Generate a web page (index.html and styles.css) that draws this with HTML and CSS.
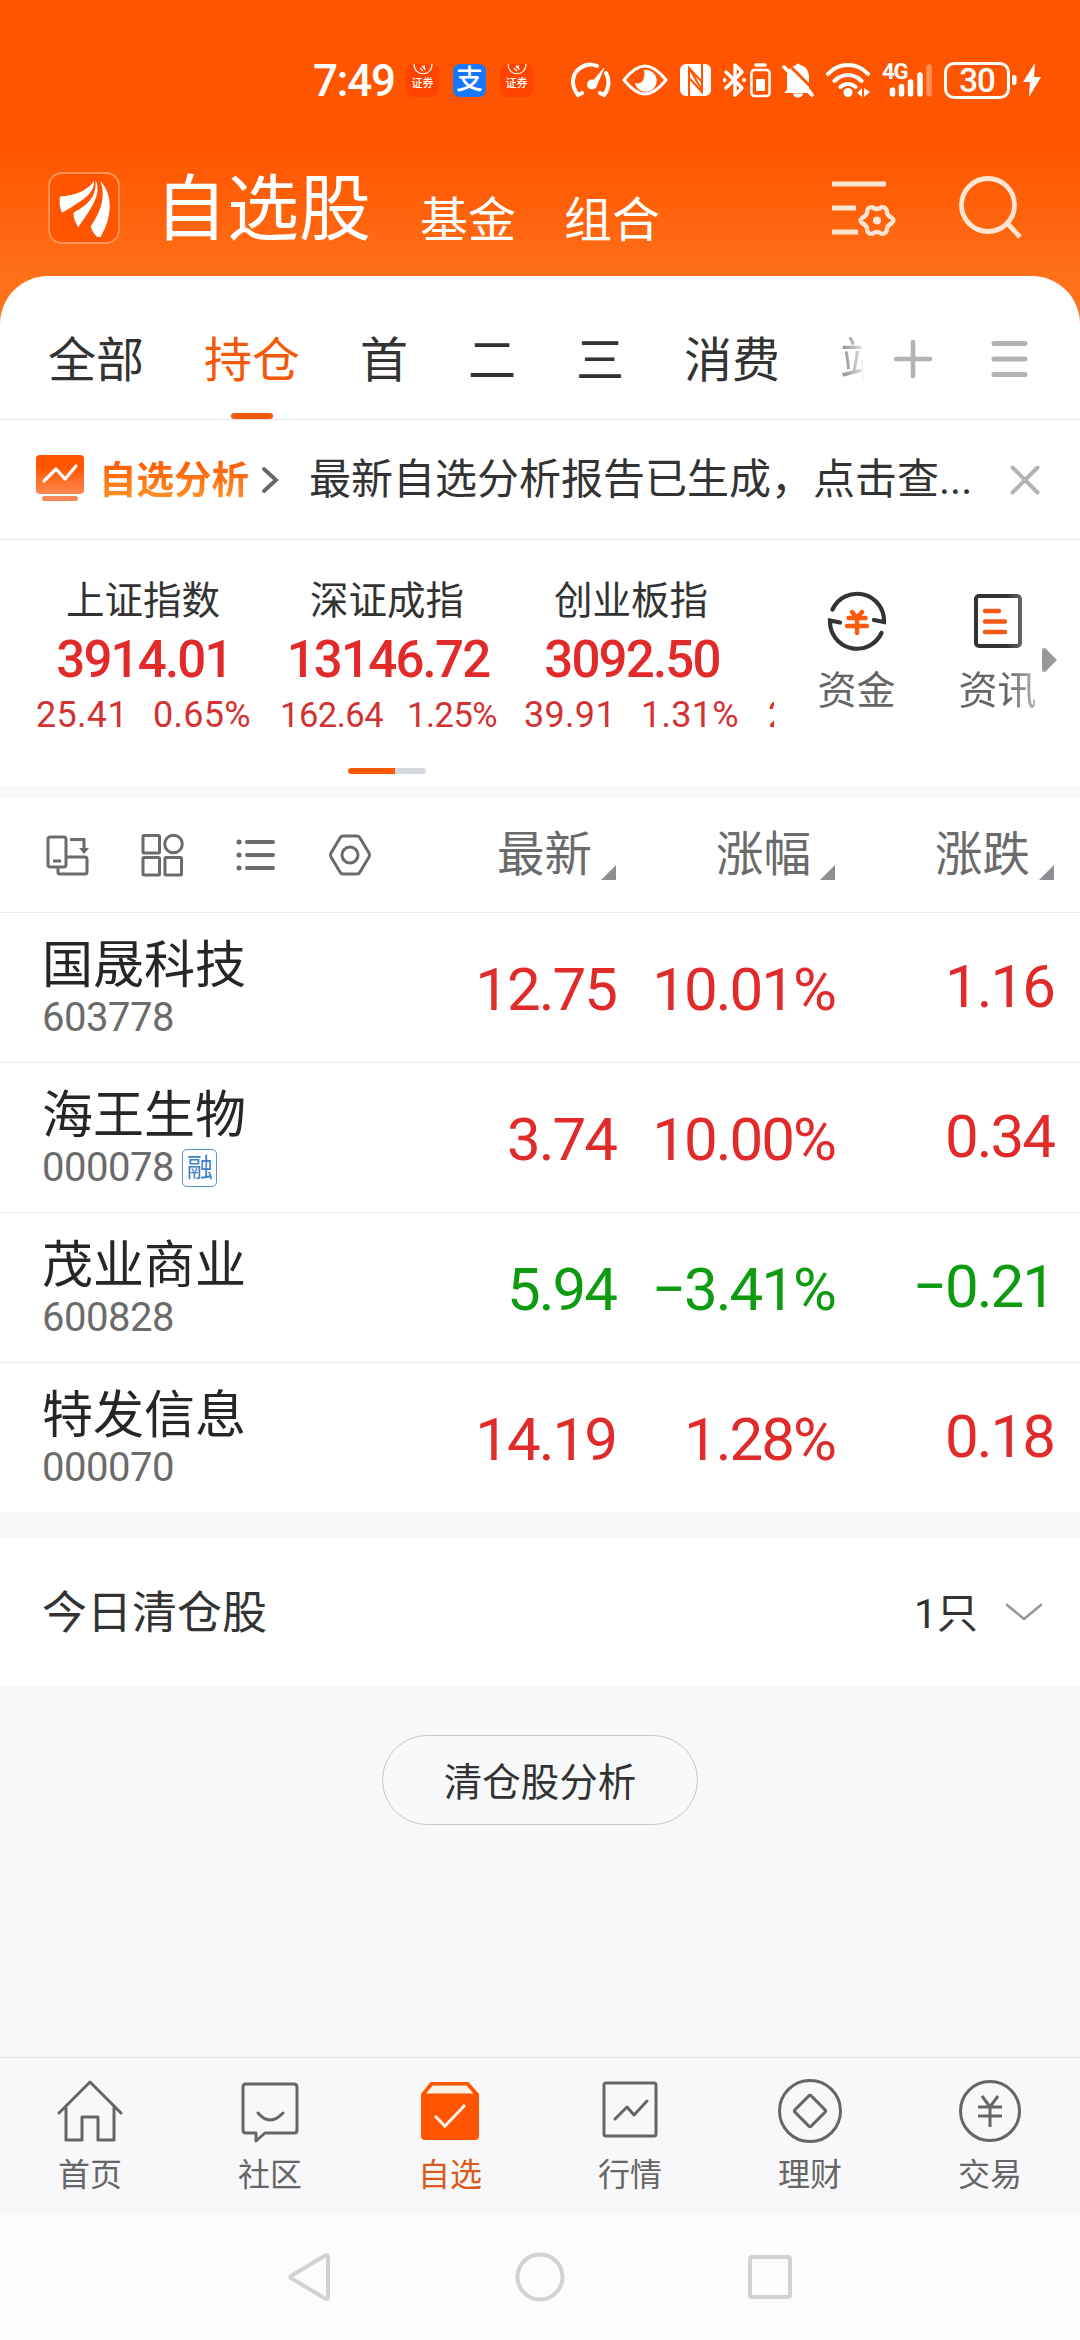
FILE: index.html
```html
<!DOCTYPE html>
<html lang="zh-CN">
<head>
    <meta charset="UTF-8">
    <meta name="viewport" content="width=device-width, initial-scale=1.0">
    <title>自选股</title>
    <link rel="stylesheet" href="styles.css">
</head>
<body>
    <div class="top">
        <div class="status-bar">
            <span class="time">7:49</span>
            <div class="app-icon zq">
                <svg width="20" height="11" viewBox="0 0 20 11" fill="none" stroke="#fff" stroke-width="1.2"><path d="M1 0C1 13 19 13 19 0M7 4l3 3M9 2l3 3M11 1l1 5"/></svg>
                <span>证券</span>
            </div>
            <div class="app-icon alipay">支</div>
            <div class="app-icon zq">
                <svg width="20" height="11" viewBox="0 0 20 11" fill="none" stroke="#fff" stroke-width="1.2"><path d="M1 0C1 13 19 13 19 0M7 4l3 3M9 2l3 3M11 1l1 5"/></svg>
                <span>证券</span>
            </div>
            <svg class="st-gauge" width="40" height="36" viewBox="0 0 40 36" fill="none" stroke="#fff" stroke-width="4" stroke-linecap="round">
                <path d="M11 31l-4 2C-1 22 1 11 10 5.500C15 2 21 2 26 4M35 11C39 18 38 27 33 33l-4-2"/>
                <path d="M20.500 21L33 6l-8 18.500z" fill="#fff" stroke-width="1"/>
                <circle cx="21" cy="22.500" r="3" fill="#fff"/>
            </svg>
            <svg class="st-eye" width="46" height="32" viewBox="0 0 46 32" fill="none" stroke="#fff" stroke-width="3">
                <path d="M2 16C10 6 17 2 23 2s13 4 21 14C36 26 29 30 23 30S10 26 2 16z"/>
                <path d="M22 6a11 11 0 1 1-9 13c5 2 11-2 9-13z" fill="#fff" stroke="none"/>
            </svg>
            <svg class="st-nfc" width="31" height="34" viewBox="0 0 31 34">
                <rect y="1" width="31" height="32" rx="6" fill="#fff"/>
                <path d="M9 33V5l13 14M22 1v28L9 15" fill="none" stroke="#f50" stroke-width="2"/>
                <path d="M9 5l13 22" stroke="#f50" stroke-width="2"/>
            </svg>
            <svg class="st-bt" width="48" height="36" viewBox="0 0 48 36" fill="none" stroke="#fff" stroke-width="3.400" stroke-linejoin="round" stroke-linecap="round">
                <path d="M3 10l16 16-7 7V3l7 7L3 26"/>
                <path d="M1.500 18h0M21 18h0" stroke-width="4"/>
                <rect x="28.500" y="8" width="18" height="26" rx="3" stroke-width="2.500"/>
                <path d="M33 3h9" stroke-width="3.500"/>
                <rect x="33" y="17" width="9" height="12" rx="1" fill="#fff" stroke="none"/>
            </svg>
            <svg class="st-bell" width="32" height="36" viewBox="0 0 32 36">
                <path d="M5 28V14C6 5 11 4 14 3q2-3 4 0c5 1 8 4 9 11v12l4 5H2z" fill="#fff"/>
                <path d="M11 31.500h10a5 4 0 0 1-10 0" fill="#fff"/>
                <path d="M3 3l29 29" stroke="#f50" stroke-width="3" transform="translate(1.500 -2.500)"/>
                <path d="M2 5l28 28" stroke="#fff" stroke-width="3.600" stroke-linecap="round"/>
            </svg>
            <svg class="st-wifi" width="44" height="36" viewBox="0 0 44 36" fill="none" stroke="#fff" stroke-width="4" stroke-linecap="round">
                <path d="M2 12C13 0 31 0 42 12M8.500 19c8-8 19-8 27 0M14.500 25c4-4 11-4 15 0"/>
                <circle cx="22" cy="30.500" r="4.500" fill="#fff" stroke="none"/>
                <path d="M31 31l5-5v9M38 26v9l6-5" fill="#fff" stroke="none"/>
            </svg>
            <div class="signal">
                <span class="net">4G</span>
                <svg width="44" height="36" viewBox="0 0 44 36" stroke="#fff" stroke-width="5.500" stroke-linecap="round">
                    <path d="M3.500 28v4M12.500 24.500V32M21.500 20v12M31 13v19"/>
                    <path d="M40 5v27" opacity=".35"/>
                </svg>
            </div>
            <span class="battery">30</span>
            <svg class="st-bolt" width="32" height="36" viewBox="0 0 32 36" fill="#fff">
                <rect x="1" y="13" width="4.500" height="10" rx="2"/>
                <path d="M24 1L12 20h7l-1 15 12-20h-7z"/>
            </svg>
        </div>
        <div class="header">
            <div class="logo">
                <svg width="56" height="60" viewBox="0 0 56 60" fill="#fff">
                    <path d="M2 18C18 17 31 12 37 2C39 15 24 23 4 35C2 29 1 24 2 18z"/>
                    <path d="M39 1C46 16 34 31 21 50C18 45 16 41 16 35C30 27 40 20 39 1z"/>
                    <path d="M44 2C58 17 56 41 43 62C38 58 35 54 34 49C44 34 50 19 44 2z"/>
                </svg>
            </div>
            <h1>自选股</h1>
            <span class="sub">基金</span>
            <span class="sub">组合</span>
            <svg class="h-set" width="66" height="60" viewBox="0 0 66 60" fill="none" stroke="#ffe6d2" stroke-width="4.800">
                <path d="M1 6h54M1 30h24M1 54h26"/>
                <path d="M41 29q5 4 10 0q5 0 5 6q1 3 5 5q3 2 0 5q-4 2-5 5q0 6-5 6q-5-4-10 0q-5 0-5-6q-1-3-5-5q-3-2 0-5q4-2 5-5q0-6 5-6z" stroke-width="4.200"/>
                <circle cx="46" cy="42.500" r="4" fill="#ffe6d2" stroke="none"/>
            </svg>
            <svg class="h-search" width="64" height="66" viewBox="0 0 64 66" fill="none" stroke="#ffe6d2" stroke-width="4.800">
                <circle cx="29" cy="31" r="26.500"/>
                <path d="M48 49l13 14"/>
            </svg>
        </div>
    </div>

    <div class="panel">
        <div class="tabs">
            <div class="tab-list">
                <span>全部</span>
                <span class="on">持仓</span>
                <span>首</span>
                <span>二</span>
                <span>三</span>
                <span>消费</span>
                <span class="fade">站</span>
            </div>
            <svg class="t-add" width="40" height="40" viewBox="0 0 40 40" stroke="#b3b3b3" stroke-width="4.600" stroke-linecap="round"><path d="M3 20h34M20 3v34"/></svg>
            <svg class="t-menu" width="38" height="40" viewBox="0 0 38 40" stroke="#b3b3b3" stroke-width="5" stroke-linecap="round"><path d="M4 4.500h31M4 20h31M4 35.500h31"/></svg>
        </div>

        <div class="notice">
            <svg width="48" height="48" viewBox="0 0 48 48" fill="none">
                <defs><linearGradient id="g" x1="0" y1="0" x2="0" y2="1"><stop offset=".3" stop-color="#ff5500"/><stop offset="1" stop-color="#ff8850"/></linearGradient></defs>
                <rect y="0" width="48" height="39" rx="4" fill="url(#g)"/>
                <path d="M8 26l12-12 9 10 11-13" stroke="#fff" stroke-width="3.200" stroke-linecap="round" stroke-linejoin="round"/>
                <rect x="6" y="41" width="36" height="5" rx="2.500" fill="#f58a58"/>
            </svg>
            <b>自选分析</b>
            <svg class="n-arrow" width="18" height="30" viewBox="0 0 18 30" fill="none" stroke="#666" stroke-width="3.800" stroke-linecap="round"><path d="M3 4l12 11L3 26"/></svg>
            <p>最新自选分析报告已生成，点击查...</p>
            <svg class="n-close" width="32" height="32" viewBox="0 0 32 32" stroke="#b3b3b3" stroke-width="4" stroke-linecap="round"><path d="M3.500 3.500l25 25M28.500 3.500l-25 25"/></svg>
        </div>

        <div class="index-bar">
            <div class="index-wrap">
                <div class="index-list">
                    <div class="index">
                        <p class="name">上证指数</p>
                        <p class="value">3914.01</p>
                        <p class="diff"><span>25.41</span><span>0.65%</span></p>
                    </div>
                    <div class="index">
                        <p class="name">深证成指</p>
                        <p class="value">13146.72</p>
                        <p class="diff small"><span>162.64</span><span>1.25%</span></p>
                    </div>
                    <div class="index">
                        <p class="name">创业板指</p>
                        <p class="value">3092.50</p>
                        <p class="diff"><span>39.91</span><span>1.31%</span></p>
                    </div>
                    <div class="index">
                        <p class="name"></p>
                        <p class="value"></p>
                        <p class="diff"><span>2</span></p>
                    </div>
                </div>
                <div class="pager"></div>
            </div>
            <div class="entry">
                <svg width="60" height="60" viewBox="0 0 60 60" fill="none" stroke="#333" stroke-width="4.200" stroke-linecap="round">
                    <path d="M5.500 18.500A27 27 0 0 1 57 31l-10-2M54.500 42A27 27 0 0 1 3 29.500l10 2"/>
                    <path d="M25 21l5 6 5-6M21.500 27h17M20 35h20M30 27v15" stroke="#ff5a0a" stroke-width="4.400"/>
                </svg>
                <span>资金</span>
            </div>
            <div class="entry news">
                <svg width="60" height="60" viewBox="0 0 60 60" fill="none" stroke="#333" stroke-width="4" stroke-linecap="round">
                    <rect x="8" y="5" width="44" height="50" rx="3"/>
                    <path d="M17 20h14M17 30.500h20M17 41h20" stroke="#f25a14" stroke-width="4.400"/>
                </svg>
                <span>资讯</span>
            </div>
            <svg class="more" width="15" height="24" viewBox="0 0 15 24" fill="#999"><path d="M0 3q0-3 3-3l12 12L3 24q-3 0-3-3z"/></svg>
        </div>
    </div>

    <div class="stocks">
        <div class="stock-head">
            <div class="tools">
                <svg width="44" height="44" viewBox="0 0 44 44" fill="none" stroke="#6b6b6b" stroke-width="3">
                    <rect x="2" y="4" width="18" height="30" rx="2.500"/>
                    <path d="M7 28h8M12 34v5q0 2 2 2h25q2 0 2-2V26q0-2-2-2H20M24 6.500h14V19"/>
                    <path d="M33 15h10l-5 6z" fill="#6b6b6b" stroke="none"/>
                </svg>
                <svg width="44" height="44" viewBox="0 0 44 44" fill="none" stroke="#6b6b6b" stroke-width="3">
                    <rect x="3" y="2.500" width="16.500" height="17.500" rx="1"/>
                    <circle cx="33.500" cy="11" r="8.800"/>
                    <rect x="3" y="24.500" width="16.500" height="17.500" rx="1"/>
                    <rect x="25" y="24.500" width="16.500" height="17.500" rx="1"/>
                </svg>
                <svg width="44" height="44" viewBox="0 0 44 44" fill="none" stroke="#6b6b6b" stroke-width="4" stroke-linecap="round">
                    <path d="M13 9h26M13 22h26M13 35h26"/>
                    <path d="M5 9h.1M5 22h.1M5 35h.1" stroke-width="5"/>
                </svg>
                <svg width="44" height="44" viewBox="0 0 44 44" fill="none" stroke="#6b6b6b" stroke-width="3" stroke-linejoin="round">
                    <path d="M12 5q1-2 3-2h14q2 0 3 2l9 15q1 2 0 4l-9 15q-1 2-3 2H15q-2 0-3-2L3 24q-1-2 0-4z"/>
                    <circle cx="22" cy="22" r="8"/>
                </svg>
            </div>
            <span class="col">最新</span>
            <span class="col">涨幅</span>
            <span class="col">涨跌</span>
        </div>

        <div class="stock">
            <div class="info">
                <p class="name">国晟科技</p>
                <p class="code">603778</p>
            </div>
            <span class="num">12.75</span>
            <span class="num">10.01%</span>
            <span class="num last">1.16</span>
        </div>
        <div class="stock">
            <div class="info">
                <p class="name">海王生物</p>
                <p class="code">000078<em>融</em></p>
            </div>
            <span class="num">3.74</span>
            <span class="num">10.00%</span>
            <span class="num last">0.34</span>
        </div>
        <div class="stock down">
            <div class="info">
                <p class="name">茂业商业</p>
                <p class="code">600828</p>
            </div>
            <span class="num">5.94</span>
            <span class="num">−3.41%</span>
            <span class="num last">−0.21</span>
        </div>
        <div class="stock">
            <div class="info">
                <p class="name">特发信息</p>
                <p class="code">000070</p>
            </div>
            <span class="num">14.19</span>
            <span class="num">1.28%</span>
            <span class="num last">0.18</span>
        </div>
    </div>

    <div class="cleared">
        <span>今日清仓股</span>
        <span class="count">1只</span>
        <svg width="38" height="22" viewBox="0 0 38 22" fill="none" stroke="#999" stroke-width="2.600" stroke-linecap="round" stroke-linejoin="round"><path d="M2 4l17 14L36 4"/></svg>
    </div>

    <div class="analysis">
        <button>清仓股分析</button>
    </div>

    <div class="tabbar">
        <div class="item">
            <svg width="70" height="70" viewBox="0 0 70 70" fill="none" stroke="#666" stroke-width="3" stroke-linejoin="round" stroke-linecap="round">
                <path d="M4 36L35 5l31 31M11 31v32h16V40h16v23h16V31"/>
            </svg>
            <span>首页</span>
        </div>
        <div class="item">
            <svg width="70" height="70" viewBox="0 0 70 70" fill="none" stroke="#666" stroke-width="3" stroke-linejoin="round" stroke-linecap="round">
                <path d="M10 7h49q3 0 3 3v43q0 3-3 3H30l-9 8v-8H11q-3 0-3-3V10q0-3 3-3z"/>
                <path d="M23 36q12 14 25 0"/>
            </svg>
            <span>社区</span>
        </div>
        <div class="item on">
            <svg width="70" height="70" viewBox="0 0 70 70" fill="none">
                <path d="M6 17L15.500 5h38L64 17v42q0 4-4 4H10q-4 0-4-4z" fill="#ff5500"/>
                <path d="M11 16.500L17.500 8.500h34l7 8z" fill="#fff0e6"/>
                <path d="M20 39l10 10 20-21" stroke="#fff3ea" stroke-width="3"/>
            </svg>
            <span>自选</span>
        </div>
        <div class="item">
            <svg width="70" height="70" viewBox="0 0 70 70" fill="none" stroke="#666" stroke-width="3" stroke-linejoin="round" stroke-linecap="round">
                <rect x="9" y="6" width="52" height="53" rx="2"/>
                <path d="M20 42l12-12 7 8 13-14"/>
            </svg>
            <span>行情</span>
        </div>
        <div class="item">
            <svg width="70" height="70" viewBox="0 0 70 70" fill="none" stroke="#666" stroke-width="3" stroke-linejoin="round">
                <circle cx="35" cy="34" r="30.500"/>
                <rect x="23.500" y="22.500" width="23" height="23" rx="2" transform="rotate(45 35 34)"/>
            </svg>
            <span>理财</span>
        </div>
        <div class="item">
            <svg width="70" height="70" viewBox="0 0 70 70" fill="none" stroke="#666" stroke-width="3">
                <circle cx="35" cy="34" r="29.500"/>
                <path d="M27 19l8 11 8-11M23 30h24M23 39h24M35 30v20"/>
            </svg>
            <span>交易</span>
        </div>
    </div>

    <div class="nav-bar">
        <svg width="48" height="52" viewBox="0 0 48 52" fill="none" stroke="#d2d2d2" stroke-width="4" stroke-linejoin="round"><path d="M5 25q-1 1 0 2l35 21q2 0 2-2V6q0-2-2-2z"/></svg>
        <svg width="52" height="52" viewBox="0 0 52 52" fill="none" stroke="#d2d2d2" stroke-width="4"><circle cx="26" cy="26" r="22.500"/></svg>
        <svg width="48" height="52" viewBox="0 0 48 52" fill="none" stroke="#d2d2d2" stroke-width="4"><rect x="4" y="6" width="40" height="40" rx="2"/></svg>
    </div>
</body>
</html>
```
FILE: styles.css
```css
* {
    box-sizing: border-box;
    margin: 0;
    padding: 0;
}
body {
    width: 1080px;
    height: 2340px;
    display: flex;
    flex-direction: column;
    background: #f7f8fa;
    font-family: Roboto, "Noto Sans CJK SC", sans-serif;
    color: #333;
    overflow: hidden;
}
svg {
    display: block;
    flex: none;
}
.top {
    height: 326px;
    margin-bottom: -50px;
    background: linear-gradient(to bottom, #ff5500 150px, #ff7018 276px);
}

/* status bar */
.status-bar {
    display: flex;
    align-items: center;
    height: 160px;
    padding-left: 313px;
    color: #fff;
}
.time {
    width: 93px;
    padding-top: 2px;
    font-size: 44px;
    font-weight: 500;
    line-height: 50px;
    letter-spacing: -1.200px;
}
.app-icon {
    width: 33px;
    height: 33px;
    margin-right: 14px;
    border-radius: 7px;
    overflow: hidden;
    text-align: center;
}
.zq {
    background: #ff4400;
    font-size: 11px;
    font-weight: 500;
    line-height: 17px;
}
.zq svg {
    margin: 0 auto;
}
.zq span {
    display: block;
}
.alipay {
    background: #1677ff;
    font-size: 27px;
    font-weight: 500;
    line-height: 33px;
}
.st-gauge {
    margin-left: 24px;
}
.st-eye {
    margin-left: 11px;
}
.st-nfc {
    margin-left: 12px;
}
.st-bt {
    margin-left: 12px;
}
.st-bell {
    margin-left: 11px;
}
.st-wifi {
    margin-left: 12px;
}
.signal {
    position: relative;
    margin: 0 11px 0 19px;
}
.net {
    position: absolute;
    left: -7px;
    top: -1px;
    font-size: 22px;
    font-weight: 700;
    line-height: 22px;
    letter-spacing: -1px;
}
.battery {
    width: 66px;
    height: 37px;
    border: 3px solid #fff;
    border-radius: 10px;
    font-size: 33px;
    font-weight: 500;
    line-height: 32px;
    letter-spacing: -1px;
    text-align: center;
}
.st-bolt {
    margin-left: 1px;
}

/* header */
.header {
    display: flex;
    height: 116px;
    padding: 12px 0 0 48px;
    color: #fff;
}
.logo {
    width: 72px;
    height: 72px;
    padding: 5px 8px;
    border: 2px solid #ff9058;
    border-radius: 14px;
    background: #ff5500;
}
.logo svg {
    width: 54px;
    height: 58px;
}
.header h1 {
    width: 265px;
    margin-left: 35px;
    font-size: 72px;
    font-weight: 400;
    line-height: 75px;
}
.sub {
    width: 144px;
    padding-top: 23px;
    font-size: 48px;
    line-height: 52px;
}
.h-set {
    margin: 6px 0 0 123px;
}
.h-search {
    margin: 2px 0 0 62px;
}

/* white panel */
.panel {
    height: 510px;
    background: #fff;
    border-radius: 48px 48px 0 0;
}
.tabs {
    display: flex;
    align-items: center;
    height: 144px;
    padding: 24px 0 0 48px;
    border-bottom: 1px solid #e5e5e5;
}
.tab-list {
    display: flex;
    align-self: stretch;
    gap: 60px;
    width: 815px;
    font-size: 48px;
    line-height: 122px;
    overflow: hidden;
    white-space: nowrap;
}
.tab-list .on {
    position: relative;
    color: #f25a0a;
}
.tab-list .on::after {
    content: "";
    position: absolute;
    left: 27px;
    bottom: 0;
    width: 42px;
    height: 6px;
    border-radius: 3px;
    background: #f25a0a;
}
.tab-list .fade {
    color: transparent;
    background: linear-gradient(to right, #8a8a8a, #e4e4e4 24px);
    background-clip: text;
    -webkit-background-clip: text;
}
.t-add {
    margin: -2px 0 0 30px;
}
.t-menu {
    margin: -2px 0 0 57px;
}
.notice {
    display: flex;
    align-items: center;
    height: 120px;
    padding-left: 36px;
    border-bottom: 1px solid #e5e5e5;
}
.notice svg:first-child {
    margin-top: -2px;
}
.notice b {
    width: 150px;
    margin-left: 15px;
    font-size: 37.500px;
    line-height: 44px;
    white-space: nowrap;
    color: transparent;
    background: linear-gradient(to bottom, #ff5f08 15%, #ff9628);
    background-clip: text;
    -webkit-background-clip: text;
}
.n-arrow {
    margin-left: 12px;
}
.notice p {
    width: 698px;
    margin-left: 30px;
    font-size: 42px;
    line-height: 50px;
    white-space: nowrap;
}
.n-close {
    margin-left: 2px;
}

/* indexes */
.index-bar {
    display: flex;
    height: 246px;
    padding-left: 21px;
}
.index-wrap {
    width: 753px;
    overflow: hidden;
}
.index-list {
    display: flex;
    padding-top: 34px;
}
.index {
    flex: none;
    width: 244px;
    text-align: center;
}
.index .name {
    height: 54px;
    font-size: 38.5px;
    line-height: 54px;
}
.index .value {
    height: 63px;
    padding-left: 2px;
    color: #e12a2a;
    font-size: 51px;
    font-weight: 500;
    line-height: 64px;
    letter-spacing: -1.8px;
}
.index .diff {
    display: flex;
    gap: 25px;
    height: 50px;
    padding-left: 15px;
    color: #d23232;
    font-size: 36px;
    line-height: 48px;
    letter-spacing: .3px;
}
.index .small {
    gap: 24px;
    font-size: 34.500px;
    letter-spacing: -.5px;
}
.pager {
    width: 78px;
    height: 6px;
    margin: 27px 0 0 327px;
    border-radius: 3px;
    background: linear-gradient(to right, #fa5a0a 47px, #d5d8dd 47px);
}
.entry {
    display: flex;
    flex-direction: column;
    align-items: center;
    width: 141px;
    margin-left: 12px;
    padding-top: 51px;
    color: #666;
    font-size: 39px;
    line-height: 56px;
}
.entry span {
    margin-top: 12px;
}
.news {
    margin-left: 0;
    -webkit-mask-image: linear-gradient(to right, #000 80px, rgba(0, 0, 0, .4) 115px);
    mask-image: linear-gradient(to right, #000 80px, rgba(0, 0, 0, .4) 115px);
}
.more {
    margin: 108px 0 0 -26px;
}

/* stock table */
.stocks {
    margin-top: 12px;
    background: #fff;
}
.stock-head {
    display: flex;
    height: 115px;
    border-bottom: 1px solid #ebebeb;
    color: #6b6b6b;
}
.tools {
    display: flex;
    gap: 50px;
    width: 397px;
    padding: 35px 0 0 46px;
}
.col {
    position: relative;
    width: 219px;
    padding-right: 24px;
    font-size: 47.500px;
    line-height: 114px;
    text-align: right;
}
.col::after {
    content: "";
    position: absolute;
    right: 0;
    top: 67px;
    border-bottom: 15px solid #8e8e93;
    border-left: 15px solid transparent;
}
.stock {
    display: flex;
    height: 150px;
    border-bottom: 1px solid #ebebeb;
    color: #e12a2a;
}
.stock:last-child {
    height: 149px;
    border-bottom: none;
}
.down {
    color: #0f9b0f;
}
.info {
    width: 397px;
    padding: 20px 0 0 42px;
}
.info .name {
    height: 64px;
    color: #262626;
    font-size: 51px;
    line-height: 66px;
}
.info .code {
    display: flex;
    align-items: center;
    color: #6b6b6b;
    font-size: 40px;
    line-height: 42px;
    letter-spacing: -.5px;
}
.info em {
    width: 35px;
    height: 38px;
    margin-left: 8px;
    border: 1.500px solid #5b95cf;
    border-radius: 5px;
    color: #3d80c8;
    font-size: 26px;
    font-style: normal;
    line-height: 36px;
    text-align: center;
}
.num {
    width: 219px;
    font-size: 60px;
    line-height: 154px;
    letter-spacing: -2px;
    text-align: right;
}
.last {
    line-height: 148px;
}

/* cleared positions */
.cleared {
    display: flex;
    align-items: center;
    height: 150px;
    margin-top: 25px;
    padding: 0 37px 0 42px;
    background: #fff;
    font-size: 45px;
    line-height: 50px;
}
.cleared span {
    padding-top: 3px;
}
.count {
    margin: 0 27px 0 auto;
    font-size: 41px;
}
.analysis {
    flex: 1;
    padding-top: 48px;
    text-align: center;
}
.analysis button {
    width: 316px;
    height: 90px;
    padding-bottom: 3px;
    border: 1px solid #c4c6c8;
    border-radius: 45px;
    background: #f8f9fb;
    color: #333;
    font-family: inherit;
    font-size: 38.500px;
}

/* bottom tab bar */
.tabbar {
    display: flex;
    height: 157px;
    border-top: 1px solid #e2e2e4;
    background: #f8f8fa;
}
.item {
    display: flex;
    flex-direction: column;
    align-items: center;
    width: 180px;
    padding-top: 19px;
    color: #666;
    font-size: 32px;
    line-height: 40px;
}
.item span {
    margin-top: 8px;
}
.item.on {
    color: #d95a1a;
}
.nav-bar {
    display: flex;
    justify-content: center;
    align-items: center;
    gap: 180px;
    height: 126px;
    background: #fcfcfc;
}
```
